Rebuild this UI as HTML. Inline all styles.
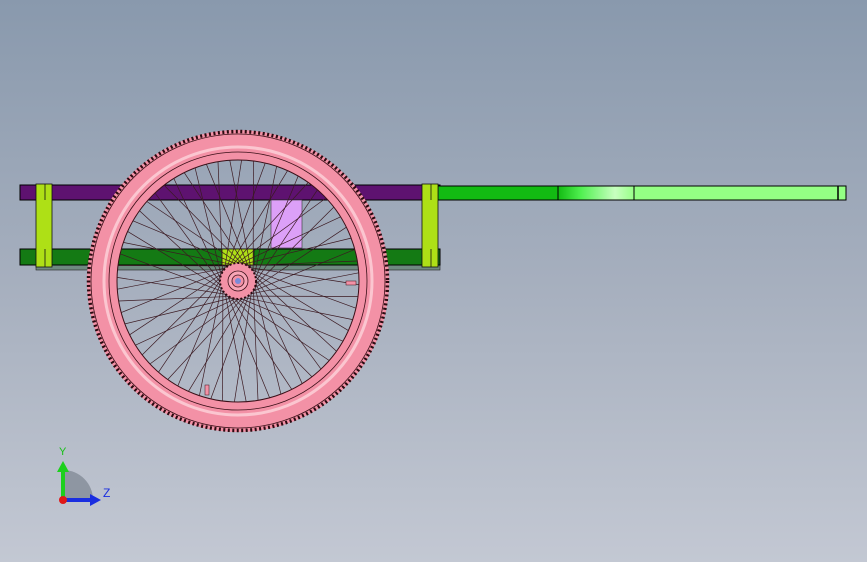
<!DOCTYPE html>
<html><head><meta charset="utf-8"><style>
html,body{margin:0;padding:0;width:867px;height:562px;overflow:hidden}
body{background:linear-gradient(#8999ad,#a6afbe 50%,#c3c8d3)}
svg{position:absolute;left:0;top:0}
</style></head><body>
<svg width="867" height="562" viewBox="0 0 867 562">
<defs>
<linearGradient id="hg" x1="0" x2="1"><stop offset="0" stop-color="#12bb12"/><stop offset="0.3" stop-color="#50f050"/><stop offset="0.75" stop-color="#c8ffc0"/><stop offset="1" stop-color="#98ff88"/></linearGradient>
</defs>
<rect x="36" y="264" width="404" height="6" fill="#6f8a80" stroke="#222" stroke-width="0.6"/>
<rect x="20" y="185" width="420" height="15" fill="#5e1270" stroke="#000" stroke-width="1"/>
<rect x="20" y="249" width="420" height="16" fill="#147a14" stroke="#000" stroke-width="1"/>
<rect x="271" y="200" width="31" height="48" fill="#dca0f8" stroke="#333" stroke-width="0.6"/>
<rect x="438" y="186" width="120" height="14" fill="#12bb12" stroke="#000" stroke-width="1"/>
<rect x="558" y="186" width="76" height="14" fill="url(#hg)" stroke="#000" stroke-width="1"/>
<rect x="634" y="186" width="212" height="14" fill="#94ff84" stroke="#000" stroke-width="1"/>
<line x1="838" y1="186" x2="838" y2="200" stroke="#000" stroke-width="1.5"/>
<g fill="#aee016" stroke="#111" stroke-width="0.8">
<rect x="36" y="184" width="16" height="83"/><line x1="45" y1="184" x2="45" y2="200"/><line x1="45" y1="249" x2="45" y2="267"/>
<rect x="422" y="184" width="16" height="83"/><line x1="431" y1="184" x2="431" y2="200"/><line x1="431" y1="249" x2="431" y2="267"/>
<rect x="222" y="249" width="32" height="16"/>
</g>
<g id="wheel">
<circle cx="238" cy="281" r="136" fill="none" stroke="#f391a6" stroke-width="30"/>
<circle cx="238" cy="281" r="149.5" fill="none" stroke="#2a0a10" stroke-width="3.5" stroke-dasharray="2 2.5"/>
<circle cx="238" cy="281" r="147" fill="none" stroke="#3a1018" stroke-width="0.8"/>
<circle cx="238" cy="281" r="134" fill="none" stroke="#fbc6d0" stroke-width="3"/>
<circle cx="238" cy="281" r="129" fill="none" stroke="#3a1018" stroke-width="0.8"/>
<circle cx="238" cy="281" r="121" fill="none" stroke="#3a1018" stroke-width="1"/>
<g id="spokes" stroke="#3b1a22" stroke-width="0.7"></g>
<circle cx="238" cy="281" r="18" fill="#f391a6" stroke="#2a0a10" stroke-width="2" stroke-dasharray="2 2"/>
<circle cx="238" cy="281" r="10" fill="#f7a5b6" stroke="#3a1018" stroke-width="0.8"/>
<circle cx="238" cy="281" r="6" fill="#f391a6" stroke="#3a1018" stroke-width="0.8"/>
<circle cx="238" cy="281" r="3" fill="#7b8bd8"/>
<rect x="205" y="385" width="4" height="10" fill="#f391a6" stroke="#3a1018" stroke-width="0.5"/>
<rect x="346" y="281" width="10" height="4" fill="#f391a6" stroke="#3a1018" stroke-width="0.5"/>
</g>
<path d="M63 500 L63 470 A30 30 0 0 1 93 500 Z" fill="#8e96a2"/>
<line x1="63" y1="500" x2="63" y2="470" stroke="#1cd01c" stroke-width="4"/>
<polygon points="57,472 69,472 63,461" fill="#1cd01c"/>
<line x1="63" y1="500" x2="92" y2="500" stroke="#1a2ee0" stroke-width="4"/>
<polygon points="90,494 90,506 101,500" fill="#1a2ee0"/>
<circle cx="63" cy="500" r="4" fill="#e01818"/>
<text x="59" y="455" font-family="Liberation Sans,sans-serif" font-size="11" fill="#16c016">Y</text>
<text x="103" y="497" font-family="Liberation Sans,sans-serif" font-size="12" fill="#1a2ee0">Z</text>
</svg>
<script>
var g=document.getElementById('spokes'),s='';
for(var i=0;i<64;i++){var a=i*Math.PI*2/64+0.03,h=a+(i%2?1.1:-1.1);
var x1=238+16*Math.cos(h),y1=281+16*Math.sin(h),x2=238+121*Math.cos(a),y2=281+121*Math.sin(a);
s+='<line x1="'+x1.toFixed(1)+'" y1="'+y1.toFixed(1)+'" x2="'+x2.toFixed(1)+'" y2="'+y2.toFixed(1)+'"/>';}
g.innerHTML=s;
</script>
</body></html>
